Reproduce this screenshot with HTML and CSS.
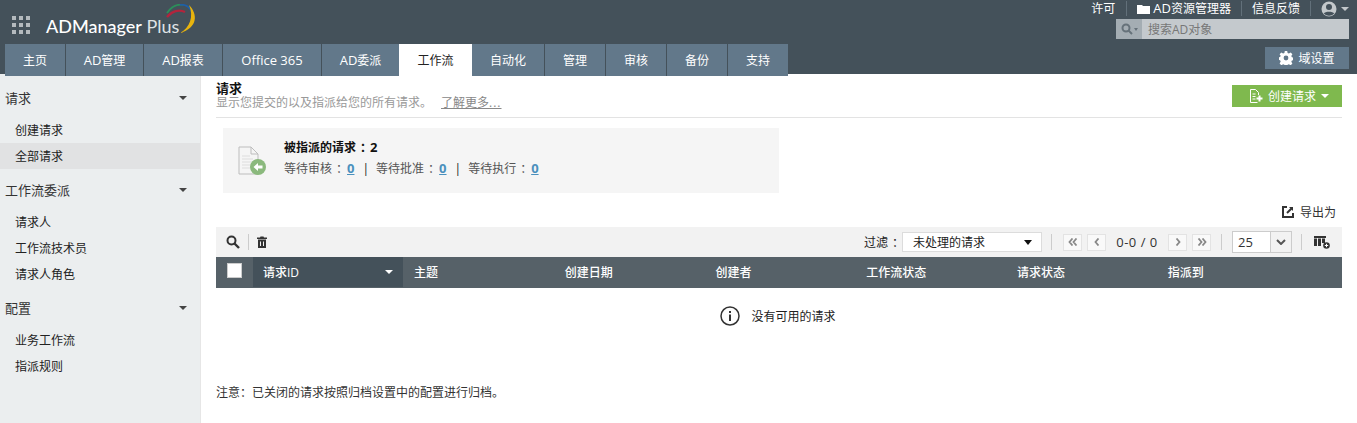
FILE: index.html
```html
<!DOCTYPE html>
<html lang="zh-CN">
<head>
<meta charset="utf-8">
<title>ADManager Plus</title>
<link rel="stylesheet" href="styles.css">
</head>
<body>
<header class="header">
  <div class="header-left">
    <div class="brand">
      <svg class="grid-icon" width="18" height="18" viewBox="0 0 18 18"><g fill="#b4babe"><rect x="0" y="0" width="4" height="4"/><rect x="7" y="0" width="4" height="4"/><rect x="14" y="0" width="4" height="4"/><rect x="0" y="7" width="4" height="4"/><rect x="7" y="7" width="4" height="4"/><rect x="14" y="7" width="4" height="4"/><rect x="0" y="14" width="4" height="4"/><rect x="7" y="14" width="4" height="4"/><rect x="14" y="14" width="4" height="4"/></g></svg>
      <div class="logo"><span class="logo-a">ADManager</span> <span class="logo-b">Plus</span>
        <svg class="logo-arcs" width="34" height="30" viewBox="0 0 34 30" fill="none">
          <path d="M2 9C6 3 12 0 18 .8" stroke="#2c8f5a" stroke-width="1.800"/>
          <path d="M15 .8C21 0 26 4 28 10" stroke="#1f5fa8" stroke-width="1.800"/>
          <path d="M2 13C7 7 14 5 20 8" stroke="#b3243c" stroke-width="2.200"/>
          <path d="M24 1C33 10 33 24 15 29C25 24 29 12 24 1Z" fill="#e8b40e"/>
        </svg>
      </div>
    </div>
    <nav class="tabs">
      <a class="tab w60">主页</a><a class="tab w77"><span class="latin">AD</span>管理</a><a class="tab w78"><span class="latin">AD</span>报表</a><a class="tab w98"><span class="latin">Office 365</span></a><a class="tab w77"><span class="latin">AD</span>委派</a><a class="tab active">工作流</a><a class="tab w72">自动化</a><a class="tab w60">管理</a><a class="tab w60">审核</a><a class="tab w60">备份</a><a class="tab w60 last">支持</a>
    </nav>
  </div>
  <div class="header-right">
    <div class="toplinks">
      <a class="toplink first">许可</a>
      <a class="toplink"><svg width="13" height="10" viewBox="0 0 13 10"><path d="M0 1h5l1 1h7v8H0z" fill="#fff"/></svg><span><span class="latin">AD</span>资源管理器</span></a>
      <a class="toplink">信息反馈</a>
      <a class="toplink user"><svg width="16" height="16" viewBox="0 0 16 16"><circle cx="8" cy="8" r="7.500" fill="#c3c8cb"/><circle cx="8" cy="6" r="3" fill="#44515a"/><path d="M2.800 12.500C4 10 12 10 13.200 12.500 10 15.500 6 15.500 2.800 12.500Z" fill="#44515a"/></svg><i class="caret caret-grey"></i></a>
    </div>
    <div class="search">
      <span class="search-icon"><svg width="12" height="12" viewBox="0 0 12 12" fill="none" stroke="#66727a" stroke-width="2"><circle cx="5" cy="5" r="3.500"/><path d="M7.500 7.500L11 11"/></svg><i class="caret caret-mini"></i></span>
      <span class="search-text">搜索AD对象</span>
    </div>
    <a class="domain-btn"><svg width="14" height="14" viewBox="0 0 14 14"><path fill="#fff" fill-rule="evenodd" d="M5.800 0h2.400l.4 2 1.300.6L11.700 1.500l1.700 1.700-1.100 1.800.6 1.300 2 .4v2.400l-2 .4-.6 1.300 1.100 1.800-1.700 1.700-1.800-1.100-1.300.6-.4 2H5.800l-.4-2-1.300-.6-1.800 1.100L.6 12.400l1.100-1.800-.6-1.300-2-.4V6.500l2-.4.6-1.300L.6 3.200 2.300 1.500l1.800 1.100 1.300-.6zM7 4.600a2.400 2.400 0 1 0 0 4.800 2.400 2.400 0 0 0 0-4.800z"/></svg>域设置</a>
  </div>
</header>

<div class="page">
  <aside class="sidebar">
    <div class="side-head">请求<i class="caret caret-dark"></i></div>
    <a class="side-item">创建请求</a>
    <a class="side-item selected">全部请求</a>
    <div class="side-head">工作流委派<i class="caret caret-dark"></i></div>
    <a class="side-item">请求人</a>
    <a class="side-item">工作流技术员</a>
    <a class="side-item">请求人角色</a>
    <div class="side-head">配置<i class="caret caret-dark"></i></div>
    <a class="side-item">业务工作流</a>
    <a class="side-item">指派规则</a>
  </aside>

  <main class="main">
    <div class="title-row">
      <div>
        <h1 class="title">请求</h1>
        <p class="subtitle">显示您提交的以及指派给您的所有请求。<a class="more">了解更多<span class="dots">...</span></a></p>
      </div>
      <a class="create-btn"><svg width="13" height="15" viewBox="0 0 13 15" fill="none" stroke="#fff"><path d="M7.500 13.500H.5V.5h5l3 3V6M2.500 5h3M2.500 7.500h3M2.500 10h3"/><path d="M6.500 9.500h6M9.500 6.500v6" stroke-width="2"/></svg><span>创建请求</span><i class="caret caret-white"></i></a>
    </div>

    <section class="summary">
      <svg class="summary-icon" width="29" height="30" viewBox="0 0 29 30" fill="none">
        <path d="M1 1h12l7 7v20H1z" fill="#f5f5f5" stroke="#bdbdbd"/>
        <path d="M13 1v7h7" stroke="#bdbdbd"/>
        <path d="M4 10h8M4 13h11M4 16h9M4 19h8M4 22h8" stroke="#dddddd"/>
        <circle cx="20" cy="21" r="8" fill="#8bb97d"/>
        <path d="M15.500 21l4.500-4v2.500h4.500v3H20V25z" fill="#fff"/>
      </svg>
      <div class="summary-text">
        <div class="summary-title">被指派的请求<span class="cl">：</span><span class="latin">2</span></div>
        <div class="summary-stats">等待审核<span class="cl">：</span><a class="num">0</a><span class="pipe">|</span>等待批准<span class="cl">：</span><a class="num">0</a><span class="pipe">|</span>等待执行<span class="cl">：</span><a class="num">0</a></div>
      </div>
    </section>

    <div class="export-row">
      <a class="export"><svg width="12" height="12" viewBox="0 0 12 12" fill="none" stroke="#333"><path d="M5 1H1v10h10V7" stroke-width="2"/><path d="M5 7l5-5" stroke-width="2"/><path d="M7 1h4v4z" fill="#333" stroke="none"/></svg>导出为</a>
    </div>

    <div class="toolbar">
      <div class="tool-left">
        <svg width="14" height="14" viewBox="0 0 14 14" fill="none" stroke="#333" stroke-width="2"><circle cx="5.500" cy="5.500" r="4"/><path d="M8.500 8.500L13 13" stroke-width="2.400"/></svg>
        <span class="sep"></span>
        <svg width="10" height="12" viewBox="0 0 10 12"><path fill="#333" fill-rule="evenodd" d="M0 1.500h3L3.500 .5h3L7 1.500h3V3H0zM1 3.500h8V12H1zM3 5.500v4.500h1V5.500zM6 5.500v4.500h1V5.500z"/></svg>
      </div>
      <div class="tool-right">
        <span class="filter-label">过滤<span class="cl">：</span></span>
        <div class="filter-select">未处理的请求<i class="caret caret-black"></i></div>
        <span class="sep sep-l"></span>
        <a class="page-btn"><svg width="10" height="8" viewBox="0 0 10 8" fill="none" stroke="#888" stroke-width="1.800"><path d="M4.500 .5L1.500 4l3 3.500M8.500 .5L5.500 4l3 3.500"/></svg></a><a class="page-btn"><svg width="6" height="8" viewBox="0 0 6 8" fill="none" stroke="#888" stroke-width="1.800"><path d="M4.500 .5L1.500 4l3 3.500"/></svg></a>
        <span class="page-count">0-0 / 0</span>
        <a class="page-btn"><svg width="6" height="8" viewBox="0 0 6 8" fill="none" stroke="#888" stroke-width="1.800"><path d="M1.500 .5L4.500 4l-3 3.500"/></svg></a><a class="page-btn"><svg width="10" height="8" viewBox="0 0 10 8" fill="none" stroke="#888" stroke-width="1.800"><path d="M1.500 .5L4.500 4l-3 3.500M5.500 .5L8.500 4l-3 3.500"/></svg></a>
        <span class="sep sep-r"></span>
        <div class="size-select"><span class="size-value">25</span><span class="size-arrow"><svg width="10" height="6" viewBox="0 0 10 6" fill="none" stroke="#555" stroke-width="2"><path d="M1 1l4 4 4-4"/></svg></span></div>
        <span class="sep sep-c"></span>
        <svg width="16" height="14" viewBox="0 0 16 14"><path fill="#333" fill-rule="evenodd" d="M0 1h12v2h-12zM0 3.500h3V11H0zM4 3.500h3V11H4zM8 3.500h3V8H8z"/><circle cx="12.500" cy="10.500" r="3.300" fill="#333"/><path d="M10.800 10.500h3.400M12.500 8.800v3.400" stroke="#fff"/></svg>
      </div>
    </div>

    <div class="thead">
      <div class="th-check"><span class="checkbox"></span></div>
      <div class="th sorted">请求ID<i class="caret caret-white"></i></div>
      <div class="th">主题</div>
      <div class="th">创建日期</div>
      <div class="th">创建者</div>
      <div class="th">工作流状态</div>
      <div class="th">请求状态</div>
      <div class="th">指派到</div>
    </div>

    <div class="empty">
      <svg width="20" height="20" viewBox="0 0 20 20" fill="none"><circle cx="10" cy="10" r="9" stroke="#333" stroke-width="1.500"/><rect x="9" y="8.500" width="2" height="6.500" fill="#333"/><rect x="9" y="5" width="2" height="2" fill="#333"/></svg>
      <span>没有可用的请求</span>
    </div>

    <p class="note">注意：已关闭的请求按照归档设置中的配置进行归档。</p>
  </main>
</div>
</body>
</html>
```

FILE: styles.css
```css
* { box-sizing: border-box; }
html, body { margin: 0; height: 100%; overflow: hidden; }
body {
  font-family: "Open Sans", "Noto Sans CJK SC", sans-serif;
  font-size: 12px;
  color: #333;
  background: #fff;
}
a { color: inherit; text-decoration: none; }
i { font-style: normal; }
.latin { font-size: 13px; }
.cl { display: inline-block; transform: translateX(4px); }

.caret { display: inline-block; width: 0; height: 0; border-style: solid; border-color: transparent; border-width: 4px 4px 0; }
.caret-grey { border-top-color: #c3c8cb; margin-left: 4px; }
.caret-mini { border-width: 3px 2.500px 0; border-top-color: #66727a; margin-left: 1px; }
.caret-dark { border-top-color: #444; margin-left: auto; }
.caret-white { border-top-color: #fff; }
.caret-black { border-top-color: #111; margin-left: auto; border-width: 5px 4.500px 0; }

.header { height: 74px; background: #44515a; display: flex; justify-content: space-between; padding: 0 8px 0 5px; }
.header-left { display: flex; flex-direction: column; }
.brand { flex: none; height: 44px; display: flex; align-items: center; padding-left: 7px; }
.grid-icon { margin-top: 6px; }
.logo { position: relative; margin-left: 16px; margin-top: 8px; color: #fff; font-family: "Lato", sans-serif; font-size: 18px; white-space: nowrap; line-height: 24px; }
.logo-a { font-weight: 500; }
.logo-b { color: #dfe3e5; font-weight: 400; }
.logo-arcs { position: absolute; left: 119px; top: -10px; }

.tabs { flex: none; display: flex; height: 32px; position: relative; z-index: 2; }
.tab { display: flex; align-items: center; justify-content: center; background: #62788a; color: #fff; font-size: 12px; border-right: 1px solid #44515a; }
.tab.last { border-right: 0; }
.w60 { width: 61px; }
.w60.last { width: 60px; }
.w72 { width: 73px; }
.w77 { width: 78px; }
.w78 { width: 79px; }
.w98 { width: 99px; }
.tab.w77:nth-child(5) { width: 77px; border-right: 0; }
.tab.active { width: 73px; background: #fff; color: #222; border-right: 0; }

.header-right { display: flex; flex-direction: column; align-items: flex-end; }
.toplinks { display: flex; align-items: center; height: 17px; color: #fff; font-size: 12px; }
.toplink { display: flex; align-items: center; gap: 3px; padding: 0 10px; height: 15px; border-right: 1px solid #62707a; line-height: 15px; }
.toplink.first { padding-right: 11px; }
.toplink.user { border-right: 0; padding: 0 0 0 10px; gap: 0; }
.search { display: flex; width: 233px; height: 20px; margin-top: 2px; background: #c4c9cd; }
.search-icon { width: 26px; background: #a4adb3; display: flex; align-items: center; justify-content: center; }
.search-text { padding-left: 6px; line-height: 21px; color: #777; font-size: 12px; }
.domain-btn { display: flex; align-items: center; gap: 5px; justify-content: center; width: 84px; height: 22px; margin-top: 8px; background: #62788a; color: #fff; font-size: 12px; }

.page { display: flex; height: 349px; }
.sidebar { width: 201px; flex: none; background: #ebeeef; border-right: 1px solid #e6e6e6; padding-top: 3px; }
.side-head { display: flex; align-items: center; height: 26px; margin-top: 8px; padding: 0 13px 2px 5px; font-size: 13px; color: #333; }
.side-head .caret { margin-top: 2px; }
.side-item { display: flex; align-items: center; height: 26px; padding-left: 15px; color: #222; }
.side-head + .side-item { margin-top: 6px; }
.side-item.selected { background: #e1e2e3; }

.main { flex: 1; min-width: 0; padding: 0 15px; }
.title-row { display: flex; justify-content: space-between; align-items: flex-start; height: 44px; border-bottom: 1px solid #e3e3e3; }
.title { margin: 7px 0 0; font-size: 13px; font-weight: 700; line-height: 15px; color: #111; }
.subtitle { margin: 0; font-size: 12px; line-height: 14px; color: #999; }
.more { margin-left: 9px; color: #888; text-decoration: underline; }
.dots { letter-spacing: 1px; }
.create-btn { display: flex; align-items: center; width: 110px; height: 22px; margin-top: 11px; padding-left: 18px; background: #7fb94e; color: #fff; }
.create-btn span { margin-left: 5px; }
.create-btn .caret { margin-left: 5px; }

.summary { display: flex; align-items: center; gap: 17px; width: 556px; height: 65px; margin: 10px 0 0 7px; padding-left: 15px; background: #f5f5f5; }
.summary-text { padding-bottom: 6px; }
.summary-title { font-size: 12px; font-weight: 700; color: #111; line-height: 18px; }
.summary-title .latin { margin-left: 2px; }
.summary-stats { margin-top: 2px; color: #555; line-height: 18px; }
.num { margin-left: 3px; color: #4a90bd; font-size: 13px; font-weight: 700; text-decoration: underline; }
.pipe { margin: 0 7px 0 8px; color: #222; }

.export-row { display: flex; justify-content: flex-end; height: 34px; padding: 12px 6px 0 0; }
.export { display: flex; align-items: center; gap: 6px; height: 14px; }

.toolbar { display: flex; justify-content: space-between; align-items: center; height: 30px; background: #f2f2f2; padding: 0 12px 0 10px; }
.tool-left, .tool-right { display: flex; align-items: center; }
.sep { width: 1px; height: 16px; background: #ccc; }
.tool-left .sep { margin: 0 8px; }
.filter-label { margin-right: 2px; color: #222; }
.filter-select { display: flex; align-items: center; width: 140px; height: 20px; padding: 0 9px 0 10px; background: #fff; border: 1px solid #dcdcdc; color: #222; }
.sep-l { margin: 0 11px 0 9px; }
.sep-r { margin: 0 10px; }
.sep-c { margin: 0 12px 0 9px; }
.page-btn { display: flex; align-items: center; justify-content: center; width: 19px; height: 17px; background: #f9f9f9; border: 1px solid #e3e3e3; }
.page-btn + .page-btn { margin-left: 5px; }
.page-count { width: 62px; text-align: center; color: #333; font-size: 13px; letter-spacing: .5px; }
.size-select { display: flex; width: 60px; height: 22px; background: #fff; border: 1px solid #ccc; }
.size-value { flex: 1; line-height: 20px; padding-left: 5px; color: #333; font-size: 13px; }
.size-arrow { width: 21px; display: flex; align-items: center; justify-content: center; background: #f2f2f2; border-left: 1px solid #ccc; }

.thead { display: grid; grid-template-columns: 37px 150px repeat(5, 150.750px) 1fr; height: 31px; background: #566168; color: #fff; font-size: 12px; }
.th-check { display: flex; padding: 6px 0 0 11px; }
.checkbox { width: 15px; height: 15px; background: #fff; border: 1px solid #ccc; }
.th { display: flex; align-items: center; padding-left: 11px; height: 30px; font-weight: 500; }
.th.sorted { background: #44515a; padding: 0 10px; justify-content: space-between; }

.empty { display: flex; align-items: center; justify-content: center; gap: 11px; height: 56px; padding-right: 2px; color: #222; }
.note { margin: 40px 0 0; line-height: 18px; color: #333; }
```
